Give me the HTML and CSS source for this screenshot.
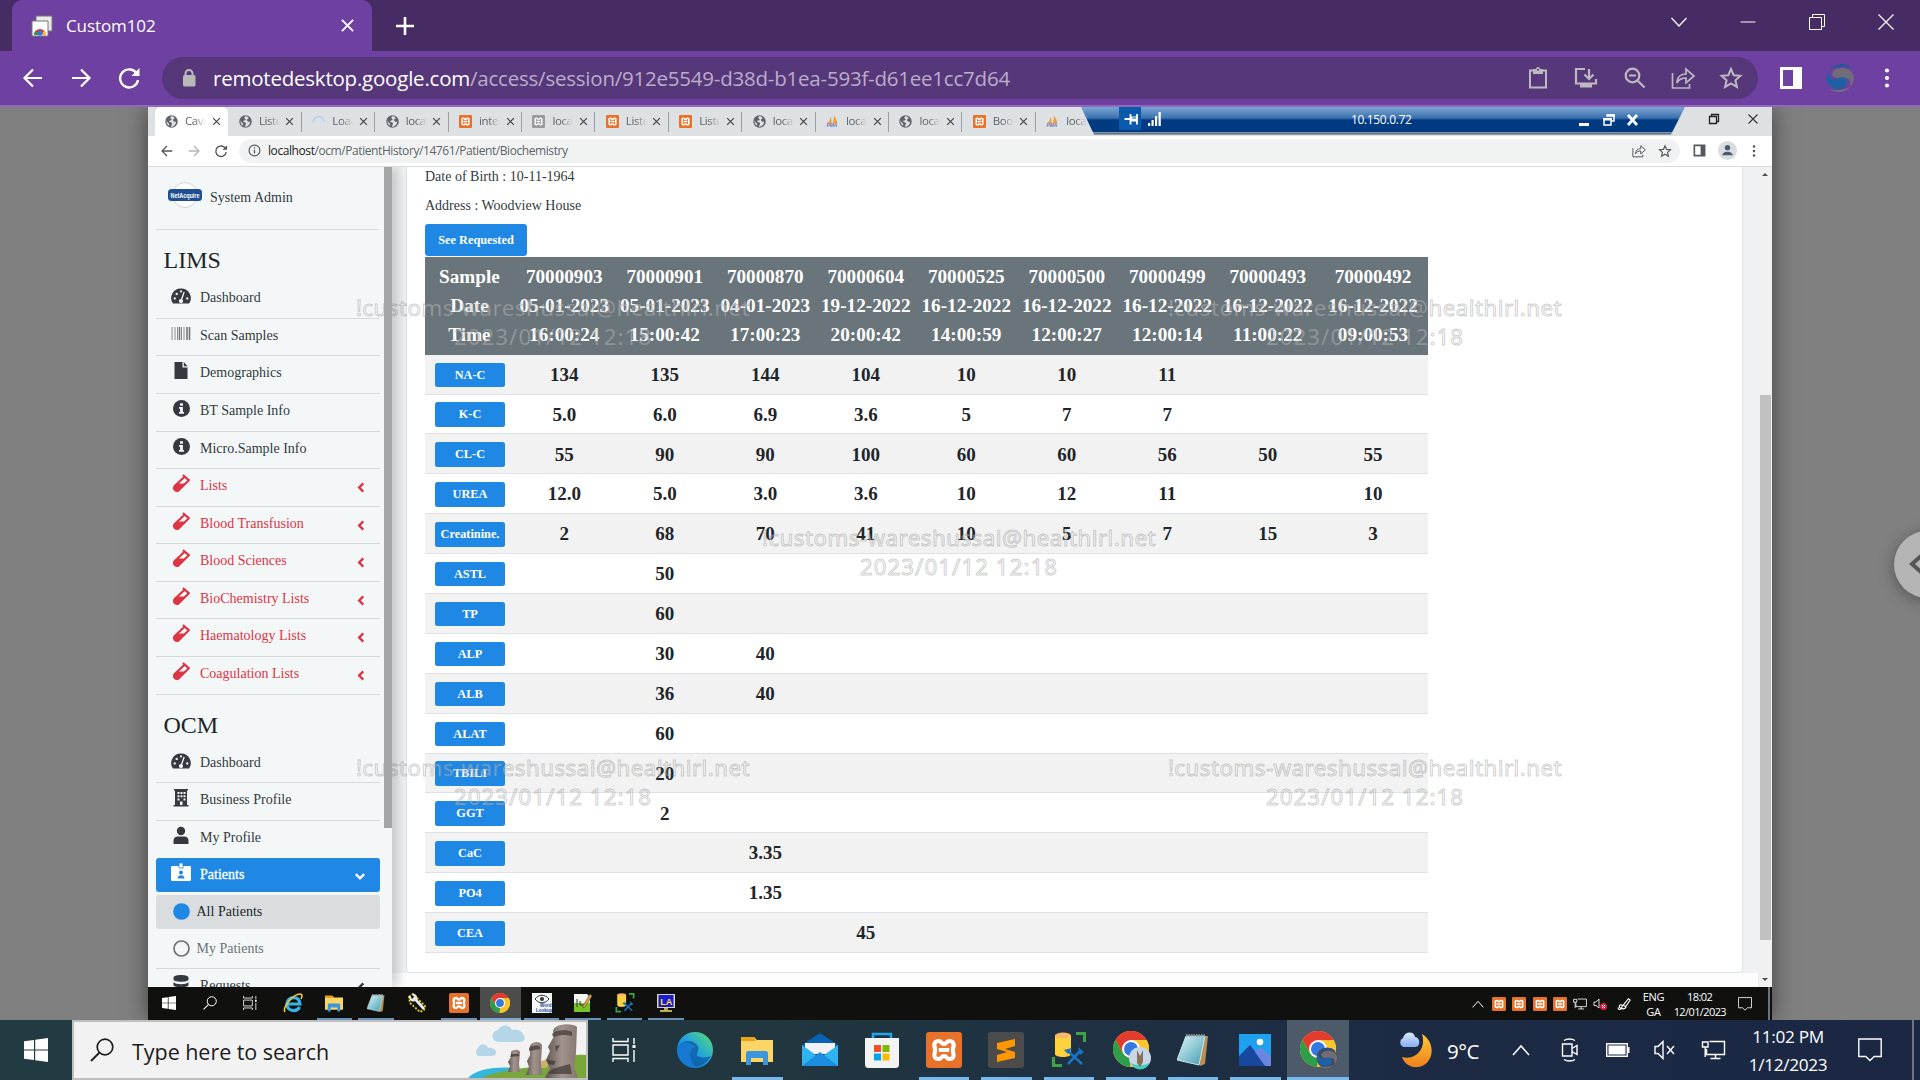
FILE: index.html
```html
<!DOCTYPE html>
<html lang="en">
<head>
<meta charset="utf-8">
<title>Custom102</title>
<link rel="stylesheet" href="styles.css">
</head>
<body>
<svg class="defs" aria-hidden="true">
  <defs>
    <linearGradient id="gEdge" x1="0" y1="1" x2="1" y2="0"><stop offset="0" stop-color="#0b62b8"/><stop offset=".5" stop-color="#1fa2e2"/><stop offset="1" stop-color="#5ee06a"/></linearGradient>
    <linearGradient id="gMoon" x1="0" y1="0" x2="0" y2="1"><stop offset="0" stop-color="#fcc935"/><stop offset="1" stop-color="#f0801c"/></linearGradient>
    <linearGradient id="gCloud" x1="0" y1="0" x2="0" y2="1"><stop offset="0" stop-color="#dbe9ff"/><stop offset="1" stop-color="#86aef0"/></linearGradient>
    <linearGradient id="gMoai" x1="0" y1="0" x2="1" y2="0"><stop offset="0" stop-color="#5d5350"/><stop offset=".5" stop-color="#a2938c"/><stop offset="1" stop-color="#85766f"/></linearGradient>
    <linearGradient id="gNote" x1="0" y1="0" x2="1" y2="1"><stop offset="0" stop-color="#dff6fa"/><stop offset="1" stop-color="#3d9cb2"/></linearGradient>
  </defs>
  <symbol id="back" viewBox="0 0 24 24"><path d="M21 12H4M12 3.5 3.5 12l8.500 8.500" fill="none" stroke="currentColor" stroke-width="2.200"/></symbol>
  <symbol id="fwd" viewBox="0 0 24 24"><path d="M3 12h17M12 3.500l8.500 8.500-8.500 8.500" fill="none" stroke="currentColor" stroke-width="2.200"/></symbol>
  <symbol id="reload" viewBox="0 0 24 24"><path d="M20 8A9 9 0 1 0 21 14" fill="none" stroke="currentColor" stroke-width="2.400"/><path d="M22.500 2v8h-8z" fill="currentColor"/></symbol>
  <symbol id="x" viewBox="0 0 24 24"><path d="M3 3l18 18M21 3 3 21" fill="none" stroke="currentColor" stroke-width="3"/></symbol>
  <symbol id="share" viewBox="0 0 24 24"><path d="M1.500 7v15h17v-4M6 17c0-6 4-9 9-9V3l8 7-8 7v-5c-4 0-7 1-9 5z" fill="none" stroke="currentColor" stroke-width="1.700"/></symbol>
  <symbol id="star" viewBox="0 0 24 24"><path d="M12 3l2.700 6.200 6.700.6-5 4.500 1.500 6.600L12 17.400l-5.900 3.500 1.500-6.600-5-4.500 6.700-.6z" fill="none" stroke="currentColor" stroke-width="2"/></symbol>
  <symbol id="panel" viewBox="0 0 24 24"><path d="M1 1h22v22H1zM4 4v16h10V4z" fill="currentColor" fill-rule="evenodd"/></symbol>
  <symbol id="dots" viewBox="0 0 24 24"><circle cx="12" cy="3" r="2.500"/><circle cx="12" cy="12" r="2.500"/><circle cx="12" cy="21" r="2.500"/></symbol>
  <symbol id="globe" viewBox="0 0 24 24"><circle cx="12" cy="12" r="11.500" fill="#5f6368"/><path d="M13 2c-3 1-4 3-2 5 2 1 2 3-1 3-3 0-3 2-1 3 4 1 5 2 3 5l-1 4c6-1 10-5 9-10-2 1-4 0-5-2s1-3 3-4c-1-2-3-3-5-4zM3 9c0 3 2 5 4 6l1 5c-4-2-6-6-5-11z" fill="#dee1e4"/></symbol>
  <symbol id="xampp" viewBox="0 0 24 24"><rect width="24" height="24" rx="2" fill="#e9722a"/><path d="M8.500 6C5.500 6 5 8.500 6 10.500v3C5 15.500 5.500 18 8.500 18c2 0 1.500-2 3.500-2s1.500 2 3.500 2c3 0 3.500-2.500 2.500-4.500v-3c1-2 .5-4.500-2.500-4.500-2 0-1.500 2-3.500 2s-1.500-2-3.500-2zM8.500 12h7" fill="none" stroke="#fff" stroke-width="2.800"/></symbol>
  <symbol id="xamppg" viewBox="0 0 24 24"><rect width="24" height="24" rx="2" fill="#9a9a9a"/><path d="M8.500 6C5.500 6 5 8.500 6 10.500v3C5 15.500 5.500 18 8.500 18c2 0 1.500-2 3.500-2s1.500 2 3.500 2c3 0 3.500-2.500 2.500-4.500v-3c1-2 .5-4.500-2.500-4.500-2 0-1.500 2-3.500 2s-1.500-2-3.500-2zM8.500 12h7" fill="none" stroke="#fff" stroke-width="2.500"/></symbol>
  <symbol id="pma" viewBox="0 0 24 24"><path d="M8 3c2 4 3 8 2 12H2C6 12 8 8 8 3zM14 1c4 4 6 9 7 14h-9c2-4 3-9 2-14z" fill="#f49a35"/><text x="1" y="23" font-family="Liberation Sans" font-weight="bold" font-style="italic" font-size="9" fill="#6c78af">PMA</text></symbol>
  <symbol id="load" viewBox="0 0 24 24"><path d="M2 14A10 10 0 0 1 22 12" fill="none" stroke="#a9cdf6" stroke-width="2.500"/></symbol>
  <symbol id="info" viewBox="0 0 24 24"><circle cx="12" cy="12" r="10" fill="none" stroke="currentColor" stroke-width="2.200"/><path d="M12 10.500v7M12 6v2.500" stroke="currentColor" stroke-width="2.400"/></symbol>
  <symbol id="dash" viewBox="0 0 24 20"><path d="M12 1A11.500 11.500 0 0 0 2.300 19h19.400A11.500 11.500 0 0 0 12 1z" fill="#343a40"/><g fill="#f3f7f8"><circle cx="4.500" cy="13" r="1.400"/><circle cx="6.800" cy="7.500" r="1.400"/><circle cx="12" cy="4.500" r="1.300"/><circle cx="19.500" cy="13" r="1.400"/><path d="M15 5l1.500.6-3 8.500a2.500 2.500 0 1 1-1.500-.5z"/></g></symbol>
  <symbol id="tube" viewBox="0 0 24 24"><path d="M14.300 1.200 22.300 8.200M16 3.500 4.500 14.500a3.500 3.500 0 0 0 4.800 5L20.500 8.500" fill="none" stroke="#dc3545" stroke-width="2.600"/><path d="M8 11.500h9L9.500 19.500a4 4 0 0 1-6-5z" fill="#dc3545"/></symbol>
  <symbol id="infoc" viewBox="0 0 24 24"><circle cx="12" cy="12" r="12" fill="#343a40"/><path d="M10 4.500h4v3.600h-4zM8.500 10H14v7h1.500v2.500h-7V17H10v-4.500H8.500z" fill="#f3f7f8"/></symbol>
  <symbol id="left" viewBox="0 0 8 12"><path d="M6.500 1.500 2 6l4.500 4.500" fill="none" stroke="currentColor" stroke-width="2.600"/></symbol>
  <symbol id="win" viewBox="0 0 24 24"><path d="M0 3.300 10 2v9.400H0zM11.200 1.800 24 0v11.400H11.200zM0 12.600h10V22L0 20.700zM11.200 12.600H24V24l-12.800-1.800z" fill="#fff"/></symbol>
  <symbol id="mag" viewBox="0 0 24 24"><circle cx="15" cy="9" r="7.800" fill="none" stroke="currentColor" stroke-width="1.700"/><path d="M9.500 14.500 1 23" stroke="currentColor" stroke-width="1.800"/></symbol>
  <symbol id="task" viewBox="0 0 24 24"><path d="M1 0v3.500h15V0M1 24v-3.500h15V24M1 7h15v10H1zM22 0v6M22 12v12" fill="none" stroke="#fff" stroke-width="1.400"/><path d="M20.500 7h3v3h-3z" fill="#fff"/></symbol>
  <symbol id="folder" viewBox="0 0 32 32"><path d="M0 3h13l3 3h16v22H0z" fill="#fbd667"/><path d="M0 3h13l2 4H0z" fill="#e2a51c"/><path d="M5 31V19c0-1 1-2 2-2h18c1 0 2 1 2 2v12h-5v-7H10v7z" fill="#3a96dd"/></symbol>
  <symbol id="notepad" viewBox="0 0 32 32"><path d="M10 2h21l-3 28-5 2z" fill="#b78e53"/><path d="M9 2h19l-6 29L0 26z" fill="url(#gNote)" stroke="#d5e4e6"/><path d="M9 1h20" stroke="#808a90" stroke-width="3" stroke-dasharray="1.500 1"/></symbol>
  <symbol id="chrome" viewBox="0 0 36 36"><circle cx="18" cy="18" r="18" fill="#fbc02d"/><path d="M2.400 9A18 18 0 0 1 33.600 9H18l-7.800 13.500z" fill="#e33b2e"/><path d="M2.400 9l7.800 13.500L18 27l-1 9A18 18 0 0 1 2.400 9z" fill="#2e9e4a"/><path d="M18 9h15.600A18 18 0 0 1 17 36l8.800-13.500z" fill="#fbc52f"/><circle cx="18" cy="18" r="9" fill="#fff"/><circle cx="18" cy="18" r="7" fill="#3478e0"/></symbol>
  <symbol id="db" viewBox="0 0 36 36"><path d="M4 3v19c0 4 16 4 16 0V3z" fill="#fdd23c"/><ellipse cx="12" cy="3.500" rx="8" ry="3" fill="#fbb768"/><path d="M25 1.500h8.500V10M2.500 25v8.500H11" fill="none" stroke="#42a047" stroke-width="3.200"/><path d="M17 19l14 13M30 18 17 32" stroke="#1773c4" stroke-width="2.600"/><path d="M13 18l8-2-4 6zM27 15l6 5-4 3z" fill="#1773c4"/></symbol>
  <symbol id="notif" viewBox="0 0 24 24"><path d="M.8 1h22.400v17.500h-7l-4.200 4-4.200-4h-7z" fill="none" stroke="#fff" stroke-width="1.400"/></symbol>
  <symbol id="net" viewBox="0 0 24 20"><path d="M8 1.500h15v13H5V9M14 14.500v4M9 18.500h10M1 2h5.500v5H1zM3.700 7v10" fill="none" stroke="#fff" stroke-width="1.400"/></symbol>
  <symbol id="up" viewBox="0 0 18 12"><path d="M1 11l8-9 8 9" fill="none" stroke="#fff" stroke-width="1.500"/></symbol>
  <symbol id="swirl" viewBox="0 0 30 30"><path d="M4 8C9 0 22-1 27 6 19 2 10 3 4 8z" fill="#1e5a9c"/><path d="M7 11C9 3 24 3 28 11c2 5 0 10-3 13 1-5 0-9-5-9-6 1-11 1-13-4z" fill="#716d78"/><path d="M22 18c0 9-13 11-18 4C0 17 1 12 4 9c0 5 2 8 7 7 5-2 10-3 11 2z" fill="#1f5fa3"/><path d="M26 23c-6 8-17 7-21 3 6 2 14 2 21-3z" fill="#77727c"/></symbol>
</svg>

<div class="screen">
  <header class="tabstrip">
    <div class="tab">
      <svg class="fav" viewBox="0 0 22 22"><path d="M5 1h16v15H5z" fill="#e9e9e9" stroke="#777"/><path d="M1 6h16v15H1z" fill="#fff" stroke="#777"/><path d="M3 20a6 6 0 0 1 12 0z" fill="#e33b2e"/><path d="M3 20c0-2 .500-3 1.500-4.500L8 20z" fill="#2e9e4a"/><path d="M15 20c0-2-.5-3-1.500-4.500L10 20z" fill="#fbc02d"/><circle cx="9" cy="18" r="2.600" fill="#3478e0"/></svg>
      <span class="tab-name">Custom102</span>
      <svg class="s15"><use href="#x"/></svg>
    </div>
    <svg class="plus" viewBox="0 0 18 18"><path d="M9 0v18M0 9h18" stroke="#fff" stroke-width="2.600"/></svg>
    <div class="controls">
      <svg viewBox="0 0 24 24"><path d="M4.500 8l7.500 8 7.500-8" fill="none" stroke="#fff" stroke-width="1.200"/></svg>
      <svg viewBox="0 0 24 24"><path d="M4.500 12h15" stroke="#fff"/></svg>
      <svg viewBox="0 0 24 24"><path d="M4.500 7.500h12v12h-12zM7.500 7.500v-3h12v12h-3" fill="none" stroke="#fff"/></svg>
      <svg viewBox="0 0 24 24"><path d="M4.500 4.500l15 15M19.500 4.500l-15 15" stroke="#fff" stroke-width="1.200"/></svg>
    </div>
  </header>
  <nav class="toolbar">
    <svg class="s24"><use href="#back"/></svg><svg class="s24"><use href="#fwd"/></svg><svg class="s24"><use href="#reload"/></svg>
    <div class="omni">
      <svg class="lock" viewBox="0 0 24 24"><path d="M8.500 11V7.500a3.500 3.500 0 0 1 7 0V11" fill="none" stroke="#b9b9b9" stroke-width="2"/><rect x="6" y="9" width="12.500" height="11.500" rx="1.500" fill="#b9b9b9"/></svg>
      <span class="url"><b>remotedesktop.google.com</b><i>/access/session/912e5549-d38d-b1ea-593f-d61ee1cc7d64</i></span>
      <div class="omni-icons">
        <svg viewBox="0 0 24 24"><path d="M4 4.500h16v17H4z" fill="none" stroke="currentColor" stroke-width="2" /><path d="M7 3h3a2 2 0 0 1 4 0h3v5H7z" fill="currentColor"/><circle cx="12" cy="3.800" r="1" fill="#56377a"/></svg>
        <svg viewBox="0 0 24 24"><path d="M11 3H2v14.500h20V13M15 3v9M10.500 8.500 15 13l4.500-4.500" fill="none" stroke="currentColor" stroke-width="2.200"/><path d="M6 18h12v3.500H6z" fill="currentColor"/></svg>
        <svg viewBox="0 0 24 24"><circle cx="9.500" cy="9.500" r="6.800" fill="none" stroke="currentColor" stroke-width="2.200"/><path d="M6 9.500h7M14.500 14.500l7 7" stroke="currentColor" stroke-width="2.200"/></svg>
        <svg><use href="#share"/></svg>
        <svg><use href="#star"/></svg>
      </div>
    </div>
    <svg class="s24 pnl"><use href="#panel"/></svg>
    <svg class="s30"><use href="#swirl"/></svg>
    <svg class="s20 menu"><use href="#dots"/></svg>
  </nav>

  <main class="stage">
    <section class="remote">
      <div class="rtabs">
        <div class="rtab on"><svg><use href="#globe"/></svg><span>Cavan</span><svg class="c"><use href="#x"/></svg></div>
        <div class="rtab"><svg><use href="#globe"/></svg><span>Listed</span><svg class="c"><use href="#x"/></svg></div>
        <div class="rtab"><svg><use href="#load"/></svg><span>Loadi</span><svg class="c"><use href="#x"/></svg></div>
        <div class="rtab"><svg><use href="#globe"/></svg><span>local</span><svg class="c"><use href="#x"/></svg></div>
        <div class="rtab"><svg><use href="#xampp"/></svg><span>inter</span><svg class="c"><use href="#x"/></svg></div>
        <div class="rtab"><svg><use href="#xamppg"/></svg><span>local</span><svg class="c"><use href="#x"/></svg></div>
        <div class="rtab"><svg><use href="#xampp"/></svg><span>Listed</span><svg class="c"><use href="#x"/></svg></div>
        <div class="rtab"><svg><use href="#xampp"/></svg><span>Listed</span><svg class="c"><use href="#x"/></svg></div>
        <div class="rtab"><svg><use href="#globe"/></svg><span>local</span><svg class="c"><use href="#x"/></svg></div>
        <div class="rtab"><svg><use href="#pma"/></svg><span>local</span><svg class="c"><use href="#x"/></svg></div>
        <div class="rtab"><svg><use href="#globe"/></svg><span>local</span><svg class="c"><use href="#x"/></svg></div>
        <div class="rtab"><svg><use href="#xampp"/></svg><span>Book</span><svg class="c"><use href="#x"/></svg></div>
        <div class="rtab last"><svg><use href="#pma"/></svg><span>local</span></div>
        <div class="rwin">
          <svg viewBox="0 0 12 12"><path d="M1.500 3.500h7v7h-7zM3.500 3.500v-2h7v7h-2" fill="none" stroke="#222" stroke-width="1.300"/></svg>
          <svg viewBox="0 0 12 12"><path d="M1.500 1.500l9 9M10.500 1.500l-9 9" stroke="#333" stroke-width="1.100"/></svg>
        </div>
        <div class="rdp">
          <svg class="pin" viewBox="0 0 22 23"><path d="M5.500 12h6M11.500 7v10.500M18 7v10.500" fill="none" stroke="#fff" stroke-width="1.800"/><path d="M12 9.500h6v5h-6z" fill="#fff"/><path d="M13 10.500h4v1h-4z" fill="#0b59ab"/></svg>
          <svg class="sig" viewBox="0 0 13 14"><path d="M0 11h2.200v3H0zM3.500 8h2.200v6H3.500zM7 4h2.200v10H7zM10.500 0h2.300v14h-2.300z" fill="#fff"/></svg>
          <span>10.150.0.72</span>
          <svg class="rc" viewBox="0 0 60 14"><path d="M0 10h10v3H0z" fill="#fff"/><path d="M28 2h7v6h-3M25 6h7v6h-7z" fill="none" stroke="#fff" stroke-width="1.500"/><path d="M27.300 1.200h8.500v2.500h-8.500zM24.300 5h8.500v2.500h-8.500z" fill="#fff"/><path d="M49 2l9 10M58 2l-9 10" stroke="#fff" stroke-width="2.800"/></svg>
        </div>
      </div>
      <div class="rbar">
        <svg class="s14"><use href="#back"/></svg><svg class="s14 dim"><use href="#fwd"/></svg><svg class="s14"><use href="#reload"/></svg>
        <div class="romni"><svg class="s13"><use href="#info"/></svg><span><b>localhost</b>/ocm/PatientHistory/14761/Patient/Biochemistry</span>
          <svg class="s14 shr"><use href="#share"/></svg><svg class="s14"><use href="#star"/></svg></div>
        <svg class="s13 rp"><use href="#panel"/></svg>
        <svg class="s19" viewBox="0 0 20 20"><circle cx="10" cy="10" r="10" fill="#d9dde2"/><circle cx="10" cy="7" r="2.800" fill="#4d5a6a"/><path d="M4.500 15c0-5 11-5 11 0z" fill="#4d5a6a"/></svg>
        <svg class="s12 rm"><use href="#dots"/></svg>
      </div>
      <div class="page">
        <aside class="side">
          <div class="user"><svg viewBox="0 0 34 28"><circle cx="17" cy="14" r="12.500" fill="#fff" stroke="#cfd3d6"/><rect x="0" y="8" width="34" height="12" rx="3.500" fill="#1d4f91"/><text x="17" y="17" text-anchor="middle" font-family="Liberation Sans" font-weight="bold" font-size="8" textLength="29" lengthAdjust="spacingAndGlyphs" fill="#fff">NetAcquire</text></svg><span>System Admin</span></div>
          <h2>LIMS</h2>
          <div class="it"><svg><use href="#dash"/></svg><span>Dashboard</span></div>
          <div class="it"><svg viewBox="0 0 20 20"><path d="M1 3v13M4 3v13M6.500 3v13M10.500 3v13M13 3v13" stroke="#8b8e91" stroke-width="1"/><path d="M8.500 3v13M16 3v13M18.500 3v13" stroke="#777" stroke-width="1.600"/></svg><span>Scan Samples</span></div>
          <div class="it"><svg viewBox="0 0 20 20"><path d="M3.500 1h8v5.500h5V18h-13z" fill="#343a40"/><path d="M12.800 1l3.700 4.200h-3.700z" fill="#343a40"/></svg><span>Demographics</span></div>
          <div class="it"><svg class="i17"><use href="#infoc"/></svg><span>BT Sample Info</span></div>
          <div class="it"><svg class="i17"><use href="#infoc"/></svg><span>Micro.Sample Info</span></div>
          <div class="it red"><svg><use href="#tube"/></svg><span>Lists</span><svg class="ch"><use href="#left"/></svg></div>
          <div class="it red"><svg><use href="#tube"/></svg><span>Blood Transfusion</span><svg class="ch"><use href="#left"/></svg></div>
          <div class="it red"><svg><use href="#tube"/></svg><span>Blood Sciences</span><svg class="ch"><use href="#left"/></svg></div>
          <div class="it red"><svg><use href="#tube"/></svg><span>BioChemistry Lists</span><svg class="ch"><use href="#left"/></svg></div>
          <div class="it red"><svg><use href="#tube"/></svg><span>Haematology Lists</span><svg class="ch"><use href="#left"/></svg></div>
          <div class="it red"><svg><use href="#tube"/></svg><span>Coagulation Lists</span><svg class="ch"><use href="#left"/></svg></div>
          <h2>OCM</h2>
          <div class="it"><svg><use href="#dash"/></svg><span>Dashboard</span></div>
          <div class="it"><svg viewBox="0 0 20 20"><path d="M3 1h14v1.500h-1V17h1.500v1.500h-15V17H4V2.500H3z" fill="#343a40"/><path d="M6.500 4h2v2h-2zM9.500 4h2v2h-2zM12.500 4h2v2h-2zM6.500 7.300h2v2h-2zM9.500 7.300h2v2h-2zM12.500 7.300h2v2h-2zM6.500 10.500h2v2h-2zM12.500 10.500h2v2h-2zM9 13.500h2.500V17H9z" fill="#f3f7f8"/></svg><span>Business Profile</span></div>
          <div class="it nb"><svg viewBox="0 0 20 20"><circle cx="10" cy="5" r="4.200" fill="#343a40"/><path d="M2.500 18v-3c0-3 1.500-4.500 4-4.500h7c2.500 0 4 1.500 4 4.500v3z" fill="#343a40"/></svg><span>My Profile</span></div>
          <div class="it act"><svg viewBox="0 0 20 20"><path d="M1.500 3h17c.8 0 1.500.5 1.500 1.500v12c0 1-.7 1.500-1.500 1.500h-17C.7 18 0 17.500 0 16.500v-12C0 3.500.7 3 1.500 3z" fill="#fff"/><path d="M8 0h4v5H8z" fill="#fff" stroke="#1f88e5" stroke-width=".8"/><circle cx="10" cy="9.500" r="2" fill="#1f88e5"/><path d="M6.500 15.500c0-4.500 7-4.500 7 0z" fill="#1f88e5"/></svg><span>Patients</span><svg class="ch down"><use href="#left"/></svg></div>
          <div class="it sub sel"><svg class="i17" viewBox="0 0 20 20"><circle cx="10" cy="10" r="9.800" fill="#1f88e5"/></svg><span>All Patients</span></div>
          <div class="it sub my"><svg class="i17" viewBox="0 0 20 20"><circle cx="10" cy="10" r="8.800" fill="none" stroke="#6d7276" stroke-width="2"/></svg><span>My Patients</span></div>
          <div class="it nb"><svg viewBox="0 0 20 20"><path d="M2.500 3.500c0-3.500 15-3.500 15 0v2c0 3-15 3-15 0zM2.500 8c2 3 13 3 15 0v3c0 3-15 3-15 0zM2.500 13.500c2 3 13 3 15 0v3c0 3-15 3-15 0z" fill="#343a40"/></svg><span>Requests</span><svg class="ch"><use href="#left"/></svg></div>
        </aside>
        <div class="thumbcol"><div class="sthumb"></div></div>
        <div class="body">
          <div class="card">
            <p>Date of Birth : 10-11-1964</p>
            <p>Address : Woodview House</p>
            <button class="req">See Requested</button>
            <div class="grid">
              <div class="r head"><div>Sample<br>Date<br>Time</div><div>70000903<br>05-01-2023<br>16:00:24</div><div>70000901<br>05-01-2023<br>15:00:42</div><div>70000870<br>04-01-2023<br>17:00:23</div><div>70000604<br>19-12-2022<br>20:00:42</div><div>70000525<br>16-12-2022<br>14:00:59</div><div>70000500<br>16-12-2022<br>12:00:27</div><div>70000499<br>16-12-2022<br>12:00:14</div><div>70000493<br>16-12-2022<br>11:00:22</div><div>70000492<br>16-12-2022<br>09:00:53</div></div>
              <div class="r"><a>NA-C</a><div>134</div><div>135</div><div>144</div><div>104</div><div>10</div><div>10</div><div>11</div><div></div><div></div></div>
              <div class="r"><a>K-C</a><div>5.0</div><div>6.0</div><div>6.9</div><div>3.6</div><div>5</div><div>7</div><div>7</div><div></div><div></div></div>
              <div class="r"><a>CL-C</a><div>55</div><div>90</div><div>90</div><div>100</div><div>60</div><div>60</div><div>56</div><div>50</div><div>55</div></div>
              <div class="r"><a>UREA</a><div>12.0</div><div>5.0</div><div>3.0</div><div>3.6</div><div>10</div><div>12</div><div>11</div><div></div><div>10</div></div>
              <div class="r"><a>Creatinine.</a><div>2</div><div>68</div><div>70</div><div>41</div><div>10</div><div>5</div><div>7</div><div>15</div><div>3</div></div>
              <div class="r"><a>ASTL</a><div></div><div>50</div></div>
              <div class="r"><a>TP</a><div></div><div>60</div></div>
              <div class="r"><a>ALP</a><div></div><div>30</div><div>40</div></div>
              <div class="r"><a>ALB</a><div></div><div>36</div><div>40</div></div>
              <div class="r"><a>ALAT</a><div></div><div>60</div></div>
              <div class="r"><a>TBILI</a><div></div><div>20</div></div>
              <div class="r"><a>GGT</a><div></div><div>2</div></div>
              <div class="r"><a>CaC</a><div></div><div></div><div>3.35</div></div>
              <div class="r"><a>PO4</a><div></div><div></div><div>1.35</div></div>
              <div class="r"><a>CEA</a><div></div><div></div><div></div><div>45</div></div>
            </div>
          </div>
          <div class="foot"></div>
        </div>
        <div class="scroll"><i class="aup"></i><div class="thumb"></div><i class="adn"></i></div>
      </div>
      <div class="rtask">
        <div class="t"><svg class="s14"><use href="#win"/></svg></div>
        <div class="t"><svg class="s14"><use href="#mag"/></svg></div>
        <div class="t tk"><svg class="s14"><use href="#task"/></svg></div>
        <div class="t ie"><svg class="s20" viewBox="0 0 20 20"><path d="M16.500 14c-3 6-13 4-12.500-3.500C4.500 3 16.500 2 17 11H5" fill="none" stroke="#35b4ea" stroke-width="3.200"/><path d="M2 19C-1 15 10 1 17 1c3 0 2 3 1 5" fill="none" stroke="#f5c638" stroke-width="1.600"/></svg></div>
        <div class="t u"><svg class="s18"><use href="#folder"/></svg></div>
        <div class="t u"><svg class="s18"><use href="#notepad"/></svg></div>
        <div class="t"><svg class="s20" viewBox="0 0 20 20"><path d="M2 4l4-3 12 12-1 4-4 2L3 10z" fill="none" stroke="#e5d619" stroke-width="1.800" stroke-dasharray="2 1.500"/><path d="M3 2a4 4 0 0 0 5 6l8 9 2-2-8-9c1-3-2-6-5-5l2 3-2 2z" fill="#e8e8e8"/></svg></div>
        <div class="t u"><svg class="s20"><use href="#xampp"/></svg></div>
        <div class="t u cur"><svg class="s20"><use href="#chrome"/></svg></div>
        <div class="t u"><svg class="s20" viewBox="0 0 20 20"><path d="M0 0h20v20H0z" fill="#f5f8fc"/><path d="M3 6c4-5 10-5 14 0-4 5-10 5-14 0z" fill="none" stroke="#333"/><circle cx="10" cy="6" r="2" fill="#333"/><text x="8" y="14" font-family="Liberation Sans" font-weight="bold" font-size="4.500" fill="#234a9a">Word</text><text x="4" y="19" font-family="Liberation Sans" font-weight="bold" font-size="4.500" fill="#234a9a">Lookup</text></svg></div>
        <div class="t u"><svg class="s20" viewBox="0 0 20 20"><path d="M1 1h13l3 3v15H1z" fill="#f4f7ef"/><path d="M1 10h16v9H1z" fill="#77c425"/><path d="M4 6v8M7 8v4h3" stroke="#333" fill="none"/><path d="M17 1l2 2-7 11-2 1v-2z" fill="#e8a836" stroke="#444" stroke-width=".6"/></svg></div>
        <div class="t u"><svg class="s20"><use href="#db"/></svg></div>
        <div class="t u"><svg class="s20" viewBox="0 0 20 20"><path d="M1 1h18v14H1z" fill="#ddd6a0"/><path d="M2.500 2h15v12h-15z" fill="#1a1ad8"/><text x="4.200" y="12" font-family="Liberation Sans" font-weight="bold" font-size="9" fill="#ffe600">LA</text><path d="M8 15h4v2h4v2H4v-2h4z" fill="#b9ad50"/></svg></div>
        <div class="rtray">
          <svg class="up" viewBox="0 0 18 12"><use href="#up"/></svg>
          <svg class="s14"><use href="#xampp"/></svg><svg class="s14"><use href="#xampp"/></svg><svg class="s14"><use href="#xampp"/></svg><svg class="s14"><use href="#xampp"/></svg>
          <svg class="s14"><use href="#net"/></svg>
          <svg class="s14" viewBox="0 0 14 14"><path d="M1 5h2l3-3v9L3 8.500H1z" fill="none" stroke="#ddd"/><circle cx="10.500" cy="9.500" r="3.500" fill="#d9213a"/><path d="M9 8l3 3M12 8l-3 3" stroke="#fff"/></svg>
          <svg class="pen" viewBox="0 0 16 16"><path d="M1.500 12c-1 3 3 3 4 0s1-3-1-3-3 3 0 4 5 1 6-2M7 9.500 13 2l2 1.500-5 7.500z" fill="none" stroke="#fff" stroke-width="1.300"/></svg>
          <span class="lang">ENG<br>GA</span><span class="rtime">18:02<br>12/01/2023</span>
          <svg class="s14 nt"><use href="#notif"/></svg><i class="sep"></i>
        </div>
      </div>
      <div class="wm a">!customs-wareshussai@healthirl.net<br><em>2023/01/12 12:18</em></div>
      <div class="wm b">!customs-wareshussai@healthirl.net<br><em>2023/01/12 12:18</em></div>
      <div class="wm m">!customs-wareshussai@healthirl.net<br><em>2023/01/12 12:18</em></div>
      <div class="wm d">!customs-wareshussai@healthirl.net<br><em>2023/01/12 12:18</em></div>
      <div class="wm e">!customs-wareshussai@healthirl.net<br><em>2023/01/12 12:18</em></div>
    </section>
    <div class="handle"><svg viewBox="0 0 26 36"><path d="M20 3 3 18l17 15" fill="none" stroke="#555" stroke-width="4"/></svg></div>
  </main>

  <footer class="taskbar">
    <div class="start"><svg class="s24"><use href="#win"/></svg></div>
    <div class="search">
      <svg class="s24"><use href="#mag"/></svg><span>Type here to search</span>
      <svg class="scene" viewBox="0 0 118 56"><path d="M0 56c12-12 40-12 60-8v8z" fill="#35b5da"/><path d="M14 56c14-7 35-9 50-11 15-9 35-13 54-12v23z" fill="#79a73c"/><path d="M72 40c5-3 8-4 14-3l-8 9h-6z" fill="#c8b36c"/><g fill="#b5d5e8"><path d="M31 20a6 6 0 0 1-1-12c3-6 11-6 14 0 6-2 11 2 12 6 2 3 0 6-4 6z"/><path d="M10 34a5 5 0 0 1 0-8c2-5 8-5 10 0 5-1 8 2 8 5 0 2-2 3-4 3z"/></g><g fill="url(#gMoai)"><path d="M43 30c2-3 8-3 9 0l-1 12 1 8H40l2-6-2-4 3-5z"/><path d="M62 24c2-5 10-5 12-1l-1 18 1 12H58l3-8-2-6 3-6z"/><path d="M85 9c2-8 20-8 24-4l-1 26-2 13 4 12H77l5-10-4-8 4-9-2-4 6-11z"/></g><path d="M84 12c3-4 15-5 20-2v4c-6-2-13-1-19 1zM61 26c3-3 9-3 11-1v2l-11 2zM43 32h8v2l-9 1zM79 38l9 1-2 4-6-1zM84 47l18-5 2 10H80zM87 24l5-1-4 7z" fill="#3f3634" opacity=".7"/></svg>
    </div>
    <div class="b tv"><svg class="s24"><use href="#task"/></svg></div>
    <div class="b"><svg class="s36" viewBox="0 0 36 36"><circle cx="18" cy="18" r="18" fill="url(#gEdge)"/><path d="M1 15C8 3 25 11 21 19c-1 3-3 4 2 6 4 1 8 0 11-1C27 38 9 38 4 27z" fill="#0c59a4" opacity=".75"/><path d="M0 18C1 9 12 8 18 15c-7 2-6 14 1 20C9 37 0 28 0 18z" fill="#1879d2"/></svg></div>
    <div class="b u"><svg class="s32"><use href="#folder"/></svg></div>
    <div class="b"><svg class="s36" viewBox="0 0 36 36"><path d="M0 13 18 1l18 12v6H0z" fill="#0a62b3"/><path d="M3 11h30v11H3z" fill="#f0f3f6"/><path d="M0 13l18 13L36 13v21H0z" fill="#2fb4f0"/><path d="M0 34l18-14 18 14z" fill="#1d8de0"/></svg></div>
    <div class="b"><svg class="s36" viewBox="0 0 36 36"><path d="M9 8V2h18v6" fill="none" stroke="#23a5ea" stroke-width="2.500"/><path d="M1 6h34v26c0 3-1 4-4 4H5c-3 0-4-1-4-4z" fill="#f3f3f3"/><path d="M10 13h7v7h-7z" fill="#f25022"/><path d="M18.500 13h7v7h-7z" fill="#7fba00"/><path d="M10 21.500h7v7h-7z" fill="#00a4ef"/><path d="M18.500 21.500h7v7h-7z" fill="#ffb900"/></svg></div>
    <div class="b u"><svg class="s36"><use href="#xampp"/></svg></div>
    <div class="b u"><svg class="s36" viewBox="0 0 36 36"><rect width="36" height="36" rx="3" fill="#4b4b4b"/><path d="M27 7v7l-10 3 10 3v6L9 30v-7l10-3-10-3v-6z" fill="#ff9800"/></svg></div>
    <div class="b u"><svg class="s36"><use href="#db"/></svg></div>
    <div class="b u"><svg class="s40" viewBox="0 0 40 40"><svg x="2" y="1" width="36" height="36"><use href="#chrome"/></svg><circle cx="29" cy="28" r="11" fill="#c7d6e8"/><path d="M20 33c4 9 15 8 18 0-6 3-12 3-18 0z" fill="#3ed0c0"/><path d="M26 20l3 6 3-6v12l-3 5-3-4z" fill="#8a7258"/></svg></div>
    <div class="b u"><svg class="s32"><use href="#notepad"/></svg></div>
    <div class="b u"><svg class="s32" viewBox="0 0 32 32"><path d="M0 0h32v32H0z" fill="#1ea1ee"/><path d="M0 22 11 11l16 21H0z" fill="#17479e"/><path d="M16 18l6-5 10 10v9H26z" fill="#6a86e0"/><circle cx="21" cy="8" r="3.300" fill="#fff"/></svg></div>
    <div class="b u cur"><svg class="s40" viewBox="0 0 40 40"><svg x="2" y="1" width="36" height="36"><use href="#chrome"/></svg><svg x="18" y="17" width="22" height="22" viewBox="0 0 22 22"><circle cx="11" cy="11" r="10.500" fill="#3f4a57"/><svg width="22" height="22"><use href="#swirl"/></svg></svg></svg></div>
    <div class="tray">
      <svg class="moon" viewBox="0 0 36 36"><path d="M24 2c12 7 13 24 2 31-9 5-19 1-22-8 12 4 25-7 20-23z" fill="url(#gMoon)"/><path d="M5 15a5 5 0 0 1 0-9C7-1 16-1 17 5c5 0 6 9 1 10z" fill="url(#gCloud)"/></svg>
      <span class="temp">9°C</span>
      <svg class="up2"><use href="#up"/></svg>
      <svg class="cam" viewBox="0 0 18 24"><path d="M1.500 6h9.500v12H1.500zM11 10.500l5-3v9l-5-3M3 2.500c3-2 8-2 11 0M3 21.500c3 2 8 2 11 0" fill="none" stroke="#fff" stroke-width="1.400"/></svg>
      <svg class="bat" viewBox="0 0 24 14"><path d="M.7.700h20.600v12.600H.7z" fill="none" stroke="#fff" stroke-width="1.400"/><path d="M2.500 2.500h17v9h-17zM22 4h1.500v6H22z" fill="#fff"/></svg>
      <svg class="snd" viewBox="0 0 22 20"><path d="M1 6.500h3l5-5v17l-5-5H1zM13 6l7 8M20 6l-7 8" fill="none" stroke="#fff" stroke-width="1.400"/></svg>
      <svg class="netw"><use href="#net"/></svg>
      <span class="clock">11:02 PM<br>1/12/2023</span>
      <svg class="s24 nt2"><use href="#notif"/></svg><i class="sep"></i>
    </div>
  </footer>
</div>
</body>
</html>
```
FILE: styles.css
```css
* { box-sizing: border-box; }
body { margin: 0; font-family: "Open Sans", sans-serif; }
.defs { position: absolute; width: 0; height: 0; }
svg { display: block; flex: none; }
b, i, em { font-style: normal; font-weight: normal; }
.screen { width: 1920px; height: 1080px; overflow: hidden; display: flex; flex-direction: column; }
.s12 { width: 12px; height: 12px; } .s13 { width: 13px; height: 13px; } .s14 { width: 14px; height: 14px; }
.s15 { width: 15px; height: 15px; } .s18 { width: 18px; height: 18px; } .s19 { width: 19px; height: 19px; }
.s20 { width: 20px; height: 20px; } .s24 { width: 24px; height: 24px; } .s30 { width: 30px; height: 30px; }
.s32 { width: 32px; height: 32px; } .s36 { width: 36px; height: 36px; } .s40 { width: 40px; height: 40px; }

/* outer browser */
.tabstrip { height: 51px; flex: none; background: #462b65; color: #fff; display: flex; padding-left: 12px; }
.tab { width: 360px; background: #6e40a1; border-radius: 10px 10px 0 0; display: flex; align-items: center; padding: 0 17px 0 19px; }
.fav { width: 22px; height: 22px; }
.tab-name { margin-left: 13px; flex: 1; font-size: 17px; letter-spacing: -.1px; }
.plus { width: 18px; height: 18px; margin: 17px 0 0 24px; }
.controls { margin-left: auto; padding: 9.500px 22.500px 0 0; display: flex; gap: 44.800px; }
.controls svg { width: 24px; height: 24px; }
.toolbar { height: 56px; flex: none; background: #6e40a1; border-bottom: 2px solid #9268bb; color: #fff; display: flex; align-items: center; padding-left: 21px; }
.toolbar > .s24 + .s24 { margin-left: 24px; }
.omni { width: 1596px; height: 42px; margin-left: 21px; border-radius: 21px; background: #56377a; display: flex; align-items: center; padding: 0 15px 0 15px; }
.lock { width: 24px; height: 24px; }
.url { margin-left: 12px; font-size: 20.500px; letter-spacing: -.22px; flex: 1; white-space: nowrap; }
.url i { color: #bcaccb; }
.omni-icons { display: flex; gap: 24.200px; color: #bdb9c0; }
.omni-icons svg { width: 24px; height: 24px; }
.toolbar .pnl { margin-left: 21px; }
.toolbar .s30 { margin-left: 22px; }
.menu { margin-left: 22px; fill: #fff; }

/* stage */
.stage { height: 913px; flex: none; background: #808080; padding-left: 148px; position: relative; overflow: hidden; }
.remote { width: 1624px; height: 913px; background: #fff; box-shadow: 0 0 22px rgba(0,0,0,.5); position: relative; display: flex; flex-direction: column; overflow: hidden; clip-path: inset(0 -40px); }
.handle { position: absolute; left: 1894px; top: 424px; width: 67px; height: 67px; border-radius: 50%; background: #b4b4b4; box-shadow: 0 3px 16px rgba(0,0,0,.35); padding: 15px 0 0 15px; }
.handle svg { width: 26px; height: 36px; }

.rtabs { height: 29px; flex: none; background: #dee1e4; display: flex; padding-left: 7px; position: relative; }
.rtab { width: 73.400px; display: flex; align-items: center; padding: 0 0 1px 10.500px; border-right: 1px solid #9a9da1; background-clip: padding-box; color: #5f6368; }
.rtab.on { background: #fff; border-radius: 6px 6px 0 0; border-right-color: transparent; padding-left: 10px; }
.rtab:not(.on) { border-image: linear-gradient(transparent 6px, #9a9da1 6px, #9a9da1 24px, transparent 24px) 1; border-width: 0 1px 0 0; }
.rtab svg { width: 13px; height: 13px; }
.rtab .c { width: 9px; height: 9px; margin-left: 5.500px; color: #3c4043; }
.rtab span { width: 21px; margin-left: 7px; overflow: hidden; font-size: 11.500px; letter-spacing: -.4px; line-height: 16px; -webkit-mask-image: linear-gradient(90deg, #000 45%, transparent); mask-image: linear-gradient(90deg, #000 45%, transparent); }
.rtab.last { border: 0; }
.rwin { margin-left: auto; display: flex; gap: 27px; padding: 6px 13.500px 0 0; }
.rwin svg { width: 12px; height: 12px; }
.rdp { position: absolute; left: 933px; top: 0; width: 604px; height: 27.500px; clip-path: polygon(0 0, 100% 0, 590px 100%, 13px 100%); background: linear-gradient(#7aa6d6, #3c71ad 11px, #003b82 13px, #003b82 25px, #8fa3b8 25px, #3a4654); display: flex; color: #fff; }
.pin { width: 22px; height: 23px; background: #0b59ab; margin-left: 38px; }
.sig { width: 13px; height: 14px; margin: 5px 0 0 7px; }
.rdp span { font-size: 12px; letter-spacing: -.35px; width: 63px; margin-left: 190px; line-height: 26px; }
.rc { width: 60px; height: 14px; margin: 5.500px 0 0 165px; }

.rbar { height: 31px; flex: none; border-bottom: 1px solid #dcdcdc; display: flex; align-items: center; padding: 0 0 1px 12px; color: #55585c; }
.rbar > .s14 + .s14 { margin-left: 13px; }
.rbar .dim { color: #b3b5b7; }
.romni { width: 1441px; height: 24px; border-radius: 12px; background: #f1f3f3; margin-left: 11px; display: flex; align-items: center; padding: 0 8px 0 9px; }
.romni span { flex: 1; margin-left: 7px; font-size: 12px; letter-spacing: -.42px; color: #5f6368; white-space: nowrap; }
.romni b { color: #222; }
.romni .shr { margin-right: 12px; }
.rp { margin-left: 13px; } .rbar .s19 { margin-left: 11.500px; }
.rm { margin-left: 11px; fill: #55585c; }

/* application page */
.page { height: 820px; flex: none; display: flex; background: #eef2f3; font-family: "Liberation Serif", serif; overflow: hidden; }
.side { width: 236px; background: #f3f7f8; padding: 0 4px 0 7.500px; flex: none; color: #343a40; font-size: 14px; }
.thumbcol { width: 8px; flex: none; background: #f3f7f8; z-index: 1; box-shadow: 4px 0 12px rgba(0,0,0,.28); clip-path: inset(0 -20px 0 0); }
.sthumb { height: 661px; background: #a4a6a6; }
.user { height: 63px; width: 223px; border-bottom: 1px solid #d9dcde; display: flex; padding: 14px 0 0 12px; }
.user svg { width: 34px; height: 28px; }
.user span { margin-left: 8.500px; line-height: 34px; }
.side h2 { margin: 0; height: 51.200px; padding: 15px 0 0 8px; font-size: 24px; line-height: 30px; font-weight: normal; color: #212529; }
.it { height: 37.580px; width: 224px; border-bottom: 1px solid #d5dadc; padding: 7px 15px 0 15.500px; display: flex; }
.it svg { width: 20px; height: 20px; margin-top: -2px; }
.it span { margin-left: 9px; line-height: 19px; flex: 1; }
.it .i17 { width: 17px; height: 17px; margin: -1px 1.500px 0; }
.it .ch { width: 8px; height: 11px; margin-top: 6px; }
.red { color: #dc3545; }
.nb { border-color: transparent; }
.act { height: 33.500px; background: #1f88e5; color: #fff; border: 0; border-radius: 3px; margin-bottom: 3.500px; -webkit-text-stroke: .3px #fff; }
.act .down { transform: rotate(-90deg); margin-right: 1px; }
.sub span { margin-left: 5.500px; }
.sel { height: 34px; background: #dadddf; border: 0; border-radius: 3px; color: #212529; }
.sel .i17 { margin-top: 1px; }
.my { height: 40px; padding-top: 10px; color: #6d7276; }
.my .i17 { margin-top: 1px; }
.body { flex: 1; display: flex; flex-direction: column; }
.card { width: 1337px; height: 806px; flex: none; margin-left: 13.500px; background: #fff; border: solid #dfe3e4; border-width: 0 1px 1px 1px; border-radius: 0 0 4px 4px; padding: 0 0 0 18.500px; color: #343a40; font-size: 14px; }
.card p { margin: 0; line-height: 29px; height: 29px; position: relative; top: -5px; }
.foot { flex: 1; background: #fdfdfd; }
.req { display: block; margin: -1px 0 .7px; width: 102px; height: 32px; border: 0; border-radius: 3px; background: #1f88e5; color: #fff; font: bold 12.300px "Liberation Serif", serif; padding: 0; }
.r { width: 1003px; height: 39.900px; display: grid; grid-template-columns: 89px repeat(8, 100.500px) 110px; align-items: center; text-align: center; font-size: 19px; font-weight: bold; color: #212529; border-bottom: 1px solid #dee2e6; padding-top: 1.300px; }
.r:nth-child(even) { background: #f2f2f2; }
.r.head { height: 98px; background: #69757b; color: #fff; line-height: 29.200px; border: 0; align-items: start; padding-top: 5px; font-size: 19.200px; }
.r a { display: block; width: 70px; height: 24.500px; line-height: 24px; margin-left: 10px; border-radius: 2.500px; background: #1f88e5; color: #fff; font-size: 12.300px; }
.scroll { width: 14px; background: #f1f1f1; display: flex; flex-direction: column; align-items: center; flex: none; }
.aup { border: 3px solid transparent; border-top: 0; border-bottom-color: #505050; margin-top: 6px; }
.thumb { width: 11px; height: 545px; margin: 219px 0 auto; background: #c1c1c1; }
.adn { border: 3px solid transparent; border-bottom: 0; border-top-color: #505050; margin-bottom: 6px; }

/* remote taskbar */
.rtask { height: 33px; flex: none; background: #10110f; display: flex; color: #fff; }
.t { width: 41.450px; display: flex; align-items: center; justify-content: center; border-bottom: 2px solid transparent; padding-top: 1px; }
.t.tk { padding-right: 3px; }
.t.u { border-image: linear-gradient(90deg, transparent 10%, #6b93b8 10%, #6b93b8 90%, transparent 90%) 1; border-width: 0 0 2px; }
.t.cur { background: #4b4c4b; border-image: none; border-bottom-color: #76a9d8; }
.rtray { margin-left: auto; display: flex; align-items: center; gap: 6.200px; }
.up { width: 12px; height: 8px; margin-right: 2px; }
.pen { width: 14px; height: 16px; margin: 0 2px 0 4px; }
.lang, .rtime { font-size: 11px; line-height: 15px; text-align: center; letter-spacing: -.4px; width: 28px; }
.rtime { width: 52px; letter-spacing: -.6px; }
.nt { margin-left: 6px; }
.sep { width: 2px; height: 100%; background: #6c757f; margin-left: 10px; margin-right: 2px; }

.wm { position: absolute; width: 420px; text-align: center; font: 22.300px/29px "Noto Sans", sans-serif; white-space: nowrap; letter-spacing: .47px; color: rgba(255,255,255,.3); -webkit-text-stroke: 1px rgba(120,120,120,.36); }
.wm em { letter-spacing: 1.050px; }
.a { left: 195px; top: 185.500px; } .b { left: 1007px; top: 185.500px; } .m { left: 601px; top: 415.500px; }
.d { left: 195px; top: 645.500px; } .e { left: 1007px; top: 645.500px; }

/* host taskbar */
.taskbar { height: 60px; flex: none; display: flex; color: #fff; background: linear-gradient(90deg, #223a42, #21363f 40%, #1c2a44 75%, #1b2743); }
.start { width: 72px; display: flex; align-items: center; justify-content: center; }
.search { width: 516px; border: 2px solid #bfbfbf; background: #f2f2f2; color: #1c1c1c; display: flex; align-items: center; padding-left: 16px; }
.search span { margin-left: 18px; padding-top: 2px; font-size: 21.500px; letter-spacing: -.04px; flex: 1; }
.scene { width: 118px; height: 56px; }
.b:not(.wm) { width: 62.250px; display: flex; align-items: center; justify-content: center; border-bottom: 3px solid transparent; padding-top: 2px; }
.b.tv:not(.wm) { width: 76px; padding-right: 4px; }
.b.u { border-image: linear-gradient(90deg, transparent 11%, #76b9ed 11%, #76b9ed 89%, transparent 89%) 1; border-width: 0 0 3px; }
.b.cur { background: #4c5a69; border-image: none; border-bottom-color: #76b9ed; }
.tray { margin-left: auto; display: flex; align-items: center; }
.moon { width: 36px; height: 36px; }
.temp { font-size: 20.500px; letter-spacing: -.5px; width: 34px; margin-left: 13px; padding-top: 2px; }
.up2 { width: 18px; height: 12px; margin-left: 31px; }
.cam { width: 18px; height: 24px; margin-left: 31px; }
.bat { width: 24px; height: 14px; margin-left: 27px; }
.snd { width: 22px; height: 20px; margin-left: 24px; }
.netw { width: 25px; height: 20px; margin-left: 25px; }
.clock { width: 90px; margin-left: 17px; text-align: center; font-size: 17.200px; line-height: 28px; letter-spacing: -.3px; padding-top: 2px; }
.nt2 { margin-left: 25px; }
.tray .sep { margin: 0 6px 0 30px; }
```
